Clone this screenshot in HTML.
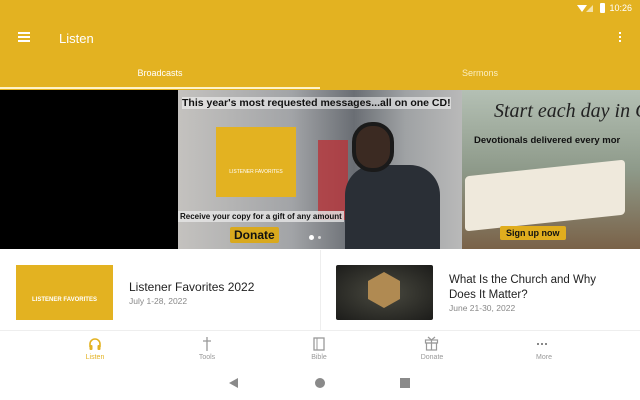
<!DOCTYPE html>
<html><head><style>
*{margin:0;padding:0;box-sizing:border-box}
body{width:640px;height:400px;overflow:hidden;font-family:"Liberation Sans",sans-serif;background:#fff;position:relative}
.abs{position:absolute}
</style></head><body>
<div class="abs" style="left:0;top:0;width:640px;height:90px;background:#E3B221"></div>
<div class="abs" style="right:8px;top:3px;color:#fff;font-size:9px">10:26</div>
<div class="abs" style="left:577px;top:5px;width:0;height:0;border-left:5px solid transparent;border-right:5px solid transparent;border-top:7px solid #fff"></div>
<div class="abs" style="left:586px;top:5px;width:0;height:0;border-left:7px solid transparent;border-bottom:7px solid #f4e2a8"></div>
<div class="abs" style="left:600px;top:3px;width:5px;height:10px;background:#fff;border-radius:1px"></div>
<div class="abs" style="left:18px;top:32px;width:12px;height:2px;background:#fff;box-shadow:0 4px 0 #fff,0 8px 0 #fff"></div>
<div class="abs" style="left:59px;top:31px;color:#fff;font-size:13px">Listen</div>
<div class="abs" style="left:619px;top:32px;width:2px;height:2px;background:#fff;box-shadow:0 4px 0 #fff,0 8px 0 #fff"></div>
<div class="abs" style="left:0;top:68px;width:320px;text-align:center;color:#fff;font-size:9px">Broadcasts</div>
<div class="abs" style="left:320px;top:68px;width:320px;text-align:center;color:#fbeebf;font-size:9px">Sermons</div>
<div class="abs" style="left:0;top:87px;width:320px;height:2px;background:#fff3c8"></div>
<div class="abs" style="left:0;top:90px;width:178px;height:159px;background:#000"></div>
<div class="abs" style="left:178px;top:90px;width:284px;height:159px;background:linear-gradient(90deg,#c4c2bf,#a2a4a7 40%,#6a6e74 62%,#9fa2a4 80%,#b9b9b9)"></div>
<div class="abs" style="left:318px;top:140px;width:30px;height:80px;background:#b8353a;opacity:.8"></div>
<div class="abs" style="left:345px;top:165px;width:95px;height:84px;background:#2a2f36;border-radius:30px 30px 0 0"></div>
<div class="abs" style="left:352px;top:122px;width:42px;height:50px;background:#3b2a22;border-radius:20px;border:4px solid #1a1a1a"></div>
<div class="abs" style="left:182px;top:97px;color:#111;font-size:10.5px;font-weight:bold;background:rgba(255,255,255,.5)">This year's most requested messages...all on one CD!</div>
<div class="abs" style="left:216px;top:127px;width:80px;height:70px;background:#E3B221;color:#fff;font-size:5px;text-align:center;padding-top:42px">LISTENER FAVORITES</div>
<div class="abs" style="left:178px;top:211px;color:#111;font-size:8px;font-weight:bold;background:rgba(230,230,230,.8);padding:1px 2px">Receive your copy for a gift of any amount</div>
<div class="abs" style="left:230px;top:227px;color:#111;font-size:12px;font-weight:bold;background:#d9a91e;padding:1px 4px;border-radius:2px">Donate</div>
<div class="abs" style="left:309px;top:235px;width:5px;height:5px;border-radius:50%;background:#fff"></div>
<div class="abs" style="left:318px;top:236px;width:3px;height:3px;border-radius:50%;background:#ddd"></div>
<div class="abs" style="left:462px;top:90px;width:178px;height:159px;background:linear-gradient(180deg,#b4c0b4,#8e9a8a 50%,#7a6248)"></div>
<div class="abs" style="left:465px;top:168px;width:160px;height:55px;background:#efe9dc;transform:skewY(-6deg);border-radius:4px"></div>
<div class="abs" style="left:494px;top:100px;color:#222;font-size:20px;font-style:italic;font-family:'Liberation Serif',serif;white-space:nowrap">Start each day in G</div>
<div class="abs" style="left:474px;top:135px;color:#111;font-size:9.5px;font-weight:bold;white-space:nowrap">Devotionals delivered every mor</div>
<div class="abs" style="left:500px;top:226px;color:#111;font-size:9px;font-weight:bold;background:#e0ad1e;padding:2px 6px;border-radius:2px">Sign up now</div>
<div class="abs" style="left:16px;top:265px;width:97px;height:55px;background:#E3B221;color:#fff;font-size:6px;font-weight:bold;text-align:center;padding-top:32px">LISTENER FAVORITES</div>
<div class="abs" style="left:129px;top:280px;color:#222;font-size:12px">Listener Favorites 2022</div>
<div class="abs" style="left:129px;top:296px;color:#888;font-size:8.5px">July 1-28, 2022</div>
<div class="abs" style="left:320px;top:250px;width:1px;height:80px;background:#eee"></div>
<div class="abs" style="left:336px;top:265px;width:97px;height:55px;background:radial-gradient(#4a4a40,#1c1c1a);border-radius:2px"></div>
<div class="abs" style="left:368px;top:272px;width:32px;height:36px;background:#b08a52;clip-path:polygon(50% 0,100% 25%,100% 75%,50% 100%,0 75%,0 25%)"></div>
<div class="abs" style="left:449px;top:273px;color:#222;font-size:11.5px;line-height:15px;width:170px">What Is the Church and Why Does It Matter?</div>
<div class="abs" style="left:449px;top:303px;color:#888;font-size:8.5px">June 21-30, 2022</div>
<div class="abs" style="left:0;top:330px;width:640px;height:1px;background:#eee"></div>
<svg class="abs" style="left:87px;top:336px" width="16" height="16" viewBox="0 0 16 16"><path d="M3 11V8a5 5 0 0 1 10 0v3" fill="none" stroke="#E3B221" stroke-width="1.6"/><rect x="2.5" y="9" width="3" height="5" rx="1" fill="#E3B221"/><rect x="10.5" y="9" width="3" height="5" rx="1" fill="#E3B221"/></svg>
<div class="abs" style="left:70px;top:354px;width:50px;text-align:center;color:#E3B221;font-size:7px">Listen</div>
<svg class="abs" style="left:200px;top:336px" width="14" height="16"><path d="M7 1v14M3 5h8" stroke="#999" stroke-width="1.3"/></svg>
<div class="abs" style="left:182px;top:354px;width:50px;text-align:center;color:#999;font-size:7px">Tools</div>
<svg class="abs" style="left:313px;top:337px" width="12" height="14"><rect x="1" y="1" width="10" height="12" fill="none" stroke="#999" stroke-width="1.3"/><path d="M4 1v12" stroke="#999"/></svg>
<div class="abs" style="left:294px;top:354px;width:50px;text-align:center;color:#999;font-size:7px">Bible</div>
<svg class="abs" style="left:424px;top:336px" width="15" height="15"><rect x="1.5" y="4" width="12" height="3" fill="none" stroke="#999" stroke-width="1.2"/><rect x="2.5" y="7" width="10" height="7" fill="none" stroke="#999" stroke-width="1.2"/><path d="M7.5 4v10M4 1l3.5 3L11 1" fill="none" stroke="#999" stroke-width="1.2"/></svg>
<div class="abs" style="left:407px;top:354px;width:50px;text-align:center;color:#999;font-size:7px">Donate</div>
<div class="abs" style="left:537px;top:343px;width:2px;height:2px;background:#888;box-shadow:4px 0 #888,8px 0 #888"></div>
<div class="abs" style="left:519px;top:354px;width:50px;text-align:center;color:#999;font-size:7px">More</div>
<div class="abs" style="left:229px;top:378px;width:0;height:0;border-top:5px solid transparent;border-bottom:5px solid transparent;border-right:9px solid #8a8a8a"></div>
<div class="abs" style="left:315px;top:378px;width:10px;height:10px;border-radius:50%;background:#8a8a8a"></div>
<div class="abs" style="left:400px;top:378px;width:10px;height:10px;background:#8a8a8a"></div>
</body></html>
